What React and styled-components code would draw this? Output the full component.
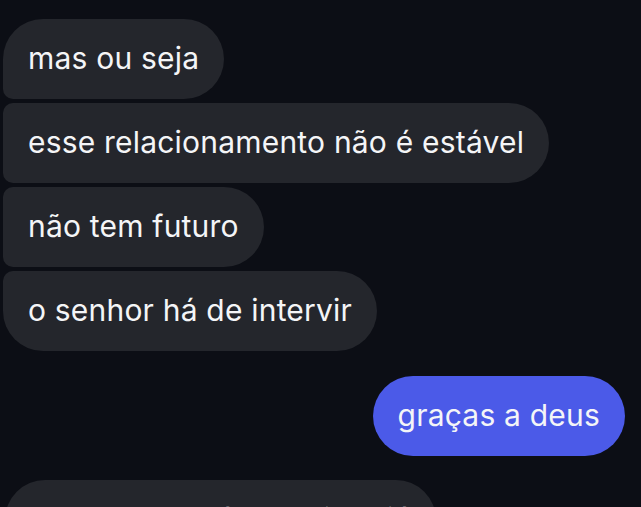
import React from 'react';
import styled, { createGlobalStyle } from 'styled-components';

const GlobalStyle = createGlobalStyle`
  html, body {
    margin: 0;
    padding: 0;
    background: #0c0e15;
  }
  body {
    font-family: Inter, "Noto Sans", "Liberation Sans", sans-serif;
    -webkit-font-smoothing: antialiased;
  }
`;

const Thread = styled.div`
  display: flex;
  flex-direction: column;
  height: 507px;
  overflow: hidden;
  padding: 19px 16px 0 3px;
  box-sizing: border-box;
  background: #0c0e15;
`;

const Group = styled.div`
  display: flex;
  flex-direction: column;
  align-items: ${(p) => (p.$mine ? 'flex-end' : 'flex-start')};
  gap: 4px;
  margin-top: ${(p) => p.$gap || '0'};
  padding-left: ${(p) => p.$indent || '0'};
`;

const Bubble = styled.div`
  box-sizing: border-box;
  height: 80px;
  display: flex;
  align-items: center;
  padding: 0 25px 2px;
  font-size: 30px;
  letter-spacing: 0.2px;
  color: #f4f5f7;
  white-space: nowrap;
  background: ${(p) => (p.$mine ? '#4b5ae8' : '#24262c')};
  border-radius: ${(p) => p.$radius};
`;

const theirs = [
  'mas ou seja',
  'esse relacionamento não é estável',
  'não tem futuro',
  'o senhor há de intervir',
];

function radiusFor(i, n) {
  const top = i === 0 ? '40px' : '10px';
  const bottom = i === n - 1 ? '40px' : '10px';
  return `${top} 40px 40px ${bottom}`;
}

export default function App() {
  return (
    <>
      <GlobalStyle />
      <Thread>
        <Group>
          {theirs.map((t, i) => (
            <Bubble key={t} $radius={radiusFor(i, theirs.length)}>
              {t}
            </Bubble>
          ))}
        </Group>
        <Group $mine $gap="25px">
          <Bubble $mine $radius="40px">graças a deus</Bubble>
        </Group>
        <Group $gap="24px" $indent="2px">
          <Bubble $radius="40px 40px 40px 10px">e O Senhor há de cuidar já</Bubble>
        </Group>
      </Thread>
    </>
  );
}
